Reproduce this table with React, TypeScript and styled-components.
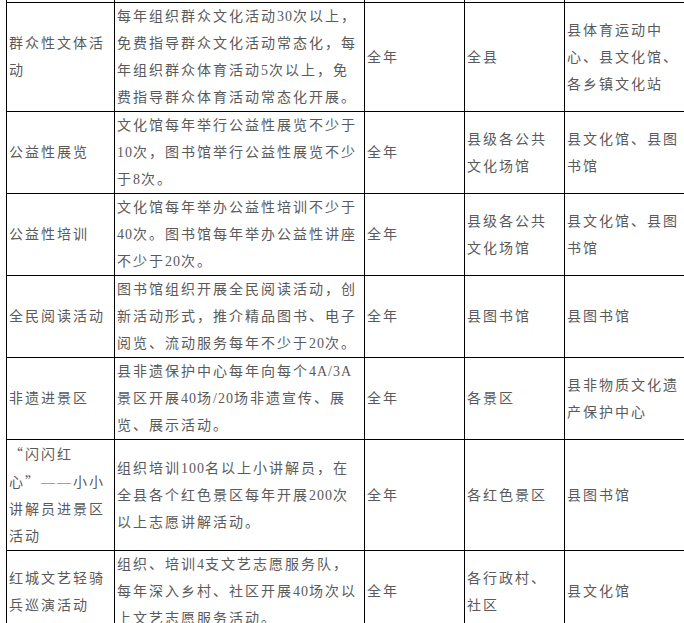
import React from "react";
import styled, { createGlobalStyle } from "styled-components";

const Global = createGlobalStyle`
  html, body {
    margin: 0;
    padding: 0;
    background: #ffffff;
    overflow: hidden;
  }
`;

const Page = styled.div`
  padding: 0 0 0 6px;
  width: 684px;
  height: 623px;
  overflow: hidden;
  box-sizing: border-box;
`;

const Table = styled.table`
  border-collapse: collapse;
  table-layout: fixed;
  width: 678px;
  font-family: "Liberation Serif", "Noto Sans CJK SC", serif;
  font-size: 14px;
  letter-spacing: 2px;
  color: #5a5a5a;
`;

const Cell = styled.td<{ $spacer?: boolean }>`
  border: 1px solid #000;
  border-top: ${(p) => (p.$spacer ? "none" : "1px solid #000")};
  padding: 0 0 0 2px;
  height: ${(p) => (p.$spacer ? "2px" : "auto")};
  line-height: 27px;
  vertical-align: middle;
  white-space: nowrap;
  overflow: hidden;
`;

const Num = styled.span`
  letter-spacing: 1px;
`;

const Quote = styled.span`
  font-family: "Noto Sans CJK SC", sans-serif;
  font-feature-settings: "fwid";
`;

type Row = {
  name: string[];
  content: string[];
  time: string;
  place: string[];
  org: string[];
};

const rows: Row[] = [
  {
    name: ["群众性文体活", "动"],
    content: [
      "每年组织群众文化活动30次以上，",
      "免费指导群众文化活动常态化，每",
      "年组织群众体育活动5次以上，免",
      "费指导群众体育活动常态化开展。",
    ],
    time: "全年",
    place: ["全县"],
    org: ["县体育运动中", "心、县文化馆、", "各乡镇文化站"],
  },
  {
    name: ["公益性展览"],
    content: [
      "文化馆每年举行公益性展览不少于",
      "10次，图书馆举行公益性展览不少",
      "于8次。",
    ],
    time: "全年",
    place: ["县级各公共", "文化场馆"],
    org: ["县文化馆、县图", "书馆"],
  },
  {
    name: ["公益性培训"],
    content: [
      "文化馆每年举办公益性培训不少于",
      "40次。图书馆每年举办公益性讲座",
      "不少于20次。",
    ],
    time: "全年",
    place: ["县级各公共", "文化场馆"],
    org: ["县文化馆、县图", "书馆"],
  },
  {
    name: ["全民阅读活动"],
    content: [
      "图书馆组织开展全民阅读活动，创",
      "新活动形式，推介精品图书、电子",
      "阅览、流动服务每年不少于20次。",
    ],
    time: "全年",
    place: ["县图书馆"],
    org: ["县图书馆"],
  },
  {
    name: ["非遗进景区"],
    content: [
      "县非遗保护中心每年向每个4A/3A",
      "景区开展40场/20场非遗宣传、展",
      "览、展示活动。",
    ],
    time: "全年",
    place: ["各景区"],
    org: ["县非物质文化遗", "产保护中心"],
  },
  {
    name: ["“闪闪红", "心”——小小", "讲解员进景区", "活动"],
    content: [
      "组织培训100名以上小讲解员，在",
      "全县各个红色景区每年开展200次",
      "以上志愿讲解活动。",
    ],
    time: "全年",
    place: ["各红色景区"],
    org: ["县图书馆"],
  },
  {
    name: ["红城文艺轻骑", "兵巡演活动"],
    content: [
      "组织、培训4支文艺志愿服务队，",
      "每年深入乡村、社区开展40场次以",
      "上文艺志愿服务活动。",
    ],
    time: "全年",
    place: ["各行政村、", "社区"],
    org: ["县文化馆"],
  },
];

function renderText(text: string) {
  const parts = text.split(/([0-9A-Z/]+|[“”])/);
  return parts.map((p, i) => {
    if (!p) return null;
    if (/^[0-9A-Z/]+$/.test(p)) return <Num key={i}>{p}</Num>;
    if (p === "“" || p === "”") return <Quote key={i}>{p}</Quote>;
    return <React.Fragment key={i}>{p}</React.Fragment>;
  });
}

function Lines({ lines }: { lines: string[] }) {
  return (
    <>
      {lines.map((l, i) => (
        <React.Fragment key={i}>
          {i > 0 && <br />}
          {renderText(l)}
        </React.Fragment>
      ))}
    </>
  );
}

export default function App() {
  return (
    <>
      <Global />
      <Page>
        <Table>
          <colgroup>
            <col style={{ width: 108 }} />
            <col style={{ width: 250 }} />
            <col style={{ width: 100 }} />
            <col style={{ width: 100 }} />
            <col style={{ width: 120 }} />
          </colgroup>
          <tbody>
            <tr>
              <Cell $spacer />
              <Cell $spacer />
              <Cell $spacer />
              <Cell $spacer />
              <Cell $spacer />
            </tr>
            {rows.map((r, i) => (
              <tr key={i}>
                <Cell>
                  <Lines lines={r.name} />
                </Cell>
                <Cell>
                  <Lines lines={r.content} />
                </Cell>
                <Cell>{r.time}</Cell>
                <Cell>
                  <Lines lines={r.place} />
                </Cell>
                <Cell>
                  <Lines lines={r.org} />
                </Cell>
              </tr>
            ))}
          </tbody>
        </Table>
      </Page>
    </>
  );
}
